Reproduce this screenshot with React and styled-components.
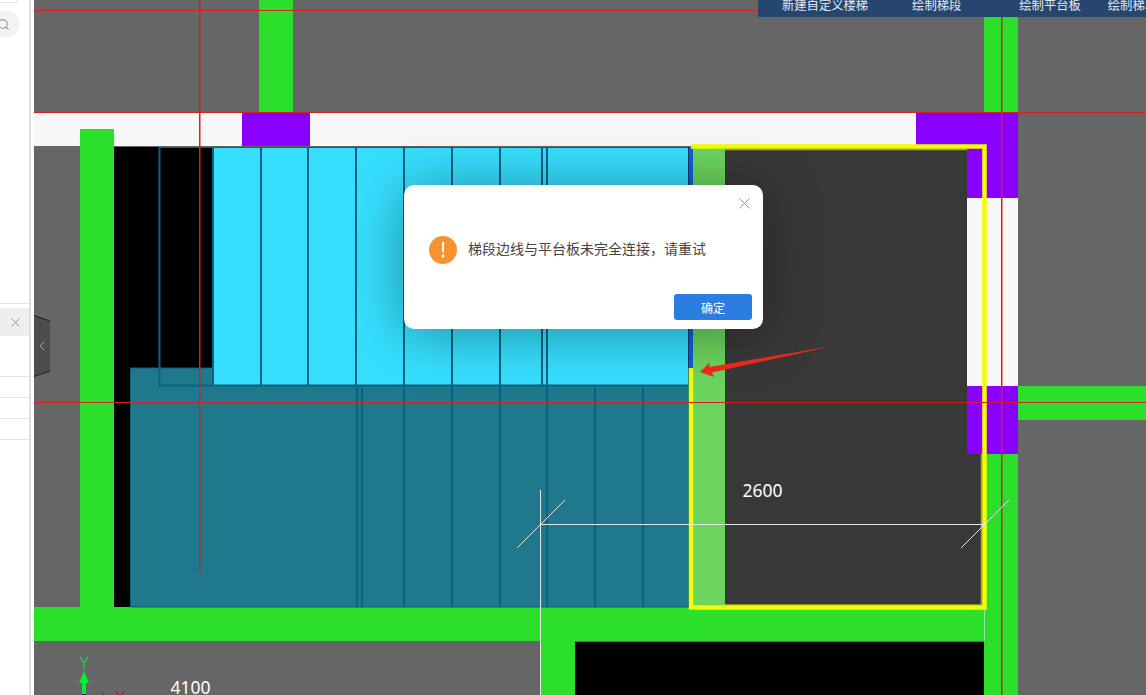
import React from 'react';
import styled, { createGlobalStyle } from 'styled-components';
import { Search, X, ChevronLeft } from 'lucide-react';

const GlobalStyle = createGlobalStyle`
  html, body {
    margin: 0;
    padding: 0;
    height: 100%;
    overflow: hidden;
    background: #fff;
    font-family: "Noto Sans CJK SC", "Noto Sans", sans-serif;
  }
`;

const Page = styled.div`
  display: flex;
  width: 100%;
  height: 100vh;
  overflow: hidden;
`;

const Sidebar = styled.aside`
  flex: 0 0 34px;
  box-sizing: border-box;
  background: #fff;
  padding-right: 3px;
`;

const SideColumn = styled.div`
  height: 100%;
  box-sizing: border-box;
  border-right: 2px solid #dedede;
  display: flex;
  flex-direction: column;
`;

const TopBox = styled.div`
  width: 18px;
  height: 3px;
  box-sizing: border-box;
  border: 1px solid #e2e2e2;
  border-top: 0;
  border-left: 0;
  border-radius: 0 0 3px 0;
`;

const SearchPill = styled.div`
  margin-top: 8px;
  width: 20px;
  height: 26px;
  background: #f3f3f3;
  border-radius: 0 13px 13px 0;
  display: flex;
  align-items: center;
  color: #9a9a9a;
  overflow: hidden;
  svg {
    margin-left: -3px;
    flex: none;
  }
`;

const UpperArea = styled.div`
  height: 266px;
  border-bottom: 1px solid #e2e2e2;
`;

const PanelHead = styled.div`
  margin-top: 4px;
  height: 28px;
  background: #eeeef0;
  display: flex;
  align-items: center;
  justify-content: flex-end;
  padding-right: 6px;
  color: #8e8e8e;
`;

const RowList = styled.div`
  margin-top: 40px;
  border-top: 1px solid #e2e2e2;
`;

const Row = styled.div`
  height: 20px;
  border-bottom: 1px solid #e2e2e2;
`;

const Canvas = styled.main`
  flex: 1;
  position: relative;
  background: #666;
  overflow: hidden;
`;

const Drawing = styled.svg`
  display: block;
  width: 100%;
  height: 100%;
`;

const DimText = styled.text`
  font-family: "Noto Sans", sans-serif;
  font-size: 17.500px;
  fill: #fff;
`;

const Toolbar = styled.nav`
  position: absolute;
  top: 0;
  right: 0;
  width: 388px;
  height: 17px;
  box-sizing: border-box;
  padding: 0 0 6px 24px;
  background: #26466f;
  display: flex;
  align-items: flex-end;
  overflow: hidden;
`;

const ToolItem = styled.span`
  flex: none;
  margin-left: ${p => p.$gap || 0}px;
  color: #e4e9f0;
  font-size: 12.300px;
  line-height: 12px;
  white-space: nowrap;
`;

const Handle = styled.button`
  position: absolute;
  left: 0;
  top: 315px;
  width: 16px;
  height: 62px;
  padding: 0;
  border: 0;
  background: #1c1c1c;
  clip-path: polygon(0 0, 100% 9%, 100% 91%, 0 100%);
  display: flex;
  align-items: center;
  justify-content: center;
  &::before {
    content: '';
    position: absolute;
    inset: 1px 0;
    background: #4d4d4d;
    clip-path: polygon(0 0, 100% 9%, 100% 91%, 0 100%);
  }
  svg {
    position: relative;
    color: #a6a6a6;
    margin-left: -1px;
  }
`;

const Dialog = styled.section`
  position: absolute;
  left: 370px;
  top: 185px;
  width: 359px;
  height: 144px;
  box-sizing: border-box;
  background: #fff;
  border-radius: 10px;
  box-shadow: 0 4px 56px rgba(0, 0, 0, 0.38);
  display: flex;
  flex-direction: column;
  padding: 9px 9px 9px 25px;
`;

const CloseRow = styled.div`
  display: flex;
  justify-content: flex-end;
  color: #8a8a8a;
  height: 19px;
`;

const Message = styled.div`
  margin-top: 21px;
  display: flex;
  align-items: flex-start;
  gap: 11px;
  color: #444;
  font-size: 14px;
  line-height: 28px;
`;

const WarnIcon = styled.span`
  flex: none;
  margin-top: 2px;
  width: 28px;
  height: 28px;
  border-radius: 50%;
  background: #f7932f;
  display: flex;
  align-items: center;
  justify-content: center;
`;

const Footer = styled.div`
  margin-top: auto;
  display: flex;
  justify-content: flex-end;
  padding-right: 2px;
`;

const ConfirmButton = styled.button`
  width: 78px;
  height: 26px;
  padding: 0;
  border: 0;
  border-radius: 3px;
  background: #2b7de0;
  color: #fff;
  font-family: inherit;
  font-size: 12px;
`;

const stairTop = [213, 261, 308, 356, 404, 452, 500, 542, 547];
const stairBottom = [357, 362, 404, 452, 500, 547, 595, 643];

const GREEN = '#2bdf2b';
const PURPLE = '#8a00ff';
const WALL = '#f7f7f7';
const LINE = '#0a6180';
const RED = '#d42020';
const YELLOW = '#f2ff00';

function CadDrawing() {
  return (
    <Drawing viewBox="34 0 1112 695" preserveAspectRatio="none">
      {/* wall band and room fills */}
      <rect x="34" y="113" width="984" height="33" fill={WALL} />
      <rect x="967" y="198" width="51" height="188" fill={WALL} />
      <rect x="114" y="147" width="580" height="460" fill="#000" />
      <rect x="725" y="147" width="242" height="460" fill="#383838" />
      <rect x="967" y="454" width="17" height="153" fill="#383838" />
      <rect x="693" y="147" width="32" height="460" fill="#6bd55e" />

      {/* green walls */}
      <rect x="259" y="0" width="34" height="112" fill={GREEN} />
      <rect x="984" y="0" width="34" height="112" fill={GREEN} />
      <rect x="80" y="129" width="34" height="478" fill={GREEN} />
      <rect x="34" y="607" width="984" height="34" fill={GREEN} />
      <rect x="984" y="454" width="34" height="241" fill={GREEN} />
      <rect x="1018" y="386" width="128" height="34" fill={GREEN} />
      <rect x="540" y="641" width="35" height="54" fill={GREEN} />
      <rect x="575" y="642" width="409" height="53" fill="#000" />

      {/* purple openings */}
      <rect x="242" y="112" width="68" height="34" fill={PURPLE} />
      <path d="M916 112H1018V198H967V146H916Z" fill={PURPLE} />
      <rect x="967" y="386" width="51" height="68" fill={PURPLE} />

      {/* lower flight */}
      <rect x="130.500" y="368" width="558" height="239" fill="#1f788c" stroke={LINE} strokeWidth="1" />
      {stairBottom.map(x => (
        <line key={x} x1={x} x2={x} y1="386" y2="607" stroke={LINE} strokeWidth="2" />
      ))}

      {/* upper flight */}
      <rect x="213" y="147" width="475" height="238" fill="#36dfff" />
      <line x1="159" x2="688" y1="147.500" y2="147.500" stroke={LINE} strokeWidth="1" />
      <path d="M159.500 147V385.500H688" fill="none" stroke={LINE} strokeWidth="2" />
      {stairTop.map(x => (
        <line key={x} x1={x} x2={x} y1="147" y2="385" stroke={LINE} strokeWidth="2" />
      ))}

      {/* selection outline */}
      <rect x="688.500" y="147" width="4.500" height="221" fill="#1060d8" />
      <path d="M725 149.500H967M981.500 454V605H725" fill="none" stroke="#a9a92e" strokeWidth="1.500" />
      <path d="M691 368V607.500H984.500V146.500H691" fill="none" stroke={YELLOW} strokeWidth="4.500" />

      {/* axis lines */}
      <g fill={RED}>
        <rect x="34" y="10" width="724" height="1" />
        <rect x="34" y="112" width="1112" height="1" />
        <rect x="34" y="402" width="1112" height="1" />
        <rect x="199" y="0" width="1.500" height="573" />
        <rect x="1001" y="0" width="1.500" height="695" />
      </g>

      {/* dimension */}
      <g stroke="#e6e6e6" strokeWidth="1">
        <line x1="541" x2="984" y1="524.500" y2="524.500" />
        <line x1="540.500" x2="540.500" y1="490" y2="695" />
        <line x1="984.500" x2="984.500" y1="610" y2="641" opacity="0.6" />
        <line x1="517" x2="565" y1="548" y2="500" />
        <line x1="961" x2="1009" y1="548" y2="500" />
      </g>
      <DimText x="742.500" y="497">2600</DimText>
      <DimText x="170.500" y="694">4100</DimText>

      {/* axis gizmo */}
      <path d="M80 657L84 663L88 657M84 663V669" fill="none" stroke="#2bd24a" strokeWidth="1.300" />
      <path d="M84 671L89 683H86V694H82V683H79Z" fill="#00f030" />
      <rect x="82" y="694" width="4" height="1" fill="#1010c0" />
      <path d="M102 695L104 693M116 692L119 695M124 692L121 695" fill="none" stroke="#c01818" strokeWidth="1.200" />

      {/* red annotation arrow */}
      <path d="M700 372L710 362L709 367L833 346L712 372.500L714 377Z" fill="#f42a1c" />
    </Drawing>
  );
}

export default function App() {
  return (
    <Page>
      <GlobalStyle />
      <Sidebar>
        <SideColumn>
          <TopBox />
          <SearchPill>
            <Search size={13} strokeWidth={2} />
          </SearchPill>
          <UpperArea />
          <PanelHead>
            <X size={15} strokeWidth={1.500} />
          </PanelHead>
          <RowList>
            <Row />
            <Row />
            <Row />
          </RowList>
        </SideColumn>
      </Sidebar>
      <Canvas>
        <CadDrawing />
        <Toolbar>
          <ToolItem>新建自定义楼梯</ToolItem>
          <ToolItem $gap={44}>绘制梯段</ToolItem>
          <ToolItem $gap={58}>绘制平台板</ToolItem>
          <ToolItem $gap={27}>绘制梯段</ToolItem>
        </Toolbar>
        <Handle aria-label="收起">
          <ChevronLeft size={16} strokeWidth={1.500} />
        </Handle>
        <Dialog role="dialog">
          <CloseRow>
            <X size={19} strokeWidth={1.100} />
          </CloseRow>
          <Message>
            <WarnIcon>
              <svg width="4" height="16" viewBox="0 0 4 16">
                <path d="M0.800 0H3.200L2.800 10.500H1.200Z" fill="#fff" />
                <circle cx="2" cy="14" r="1.500" fill="#fff" />
              </svg>
            </WarnIcon>
            <span>{'梯段边线与平台板未完全连接\uFF0C请重试'}</span>
          </Message>
          <Footer>
            <ConfirmButton>确定</ConfirmButton>
          </Footer>
        </Dialog>
      </Canvas>
    </Page>
  );
}
